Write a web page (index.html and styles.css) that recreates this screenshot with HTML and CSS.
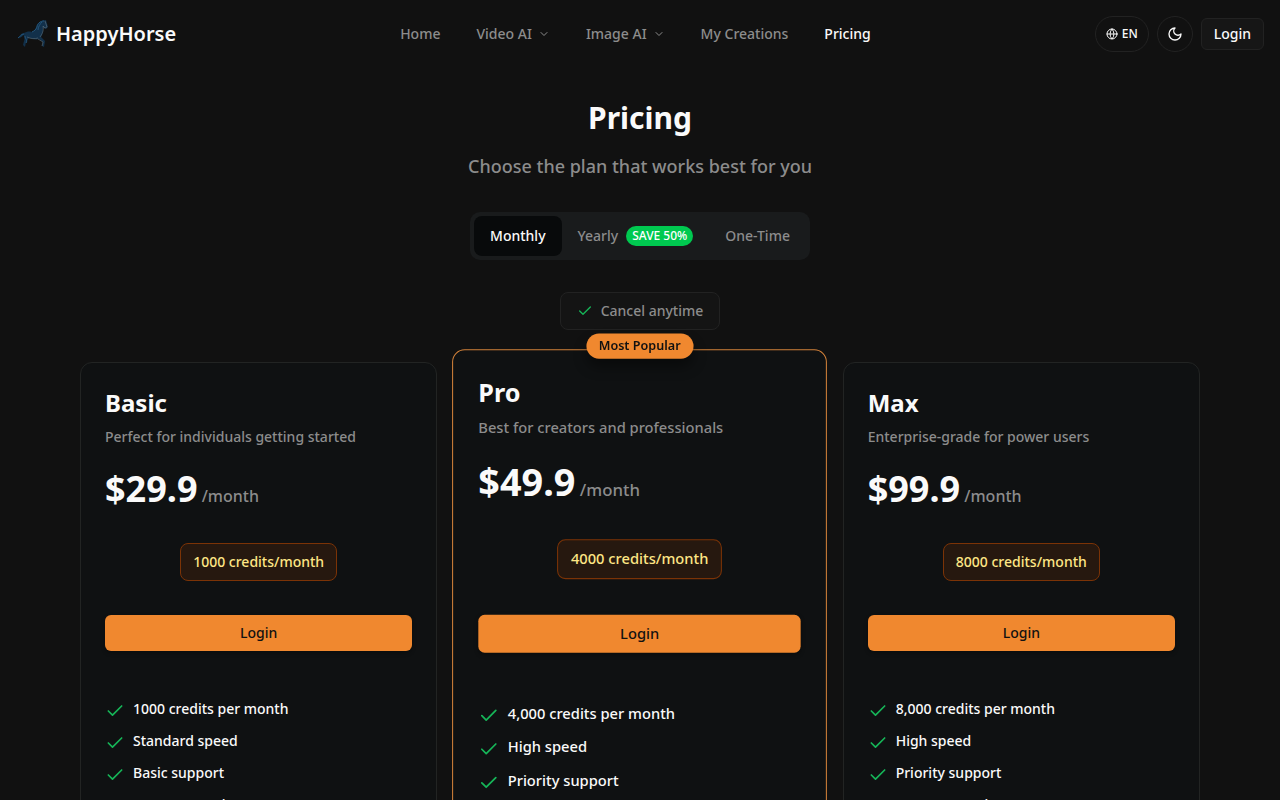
FILE: index.html
```
<!DOCTYPE html>
<html lang="en" class="dark">
<head>
    <meta charset="UTF-8">
    <meta name="viewport" content="width=device-width, initial-scale=1.0">
    <title>Pricing - HappyHorse</title>
    <link rel="stylesheet" href="styles.css">
</head>
<body>
    <!-- Shared icons -->
    <svg class="sprite" aria-hidden="true">
        <symbol id="check" viewBox="0 0 24 24"><path d="M20 6 9 17l-5-5"/></symbol>
        <symbol id="chevron" viewBox="0 0 24 24"><path d="m6 9 6 6 6-6"/></symbol>
    </svg>

    <header class="header">
        <a href="#" class="brand">
            <svg class="logo" viewBox="0 0 32 32" aria-hidden="true">
                <path class="logo-body" d="M30 2C26 2 23 4 21 7c-1 3-2 5-5 7-3-1-6 0-8 1-3 0-4 3-6 5 3 0 4-2 6-3 0 3 1 4 0 6l-1 4 2 2 1-5 3-4c4 1 7 2 10 1l4 3-1 4 2 1 1-6-4-4c2-3 2-6 2-9l3 1 2-2z"/>
                <path class="logo-mane" d="M28 3c-4 0-7 3-7 6-1 3-3 4-5 5M26 4c-2 2-4 5-4 8M8 16c-3 0-4 3-6 4M9 18c0 3 3 4 1 7"/>
                <path class="logo-line" d="m29 3 2 6-2 1-2-2c1 5-1 8-3 11M11 19c4 2 8 2 11 1M22 21l5 3-1 4"/>
            </svg>
            <span>HappyHorse</span>
        </a>

        <nav class="nav">
            <a href="#">Home</a>
            <button type="button">Video AI <svg class="icon chevron"><use href="#chevron"/></svg></button>
            <button type="button">Image AI <svg class="icon chevron"><use href="#chevron"/></svg></button>
            <a href="#">My Creations</a>
            <a href="#" class="active">Pricing</a>
        </nav>

        <div class="actions">
            <button type="button" class="lang">
                <svg class="icon globe" viewBox="0 0 24 24"><circle cx="12" cy="12" r="10"/><path d="M12 2a14.5 14.5 0 0 0 0 20 14.5 14.5 0 0 0 0-20M2 12h20"/></svg>
                EN
            </button>
            <button type="button" class="theme" aria-label="Toggle theme">
                <svg class="icon moon" viewBox="0 0 24 24"><path d="M12 3a6 6 0 0 0 9 9 9 9 0 1 1-9-9Z"/></svg>
            </button>
            <button type="button" class="login">Login</button>
        </div>
    </header>

    <main class="main">
        <h1>Pricing</h1>
        <p class="subtitle">Choose the plan that works best for you</p>

        <div class="tabs">
            <button type="button" class="selected">Monthly</button>
            <button type="button">Yearly <span class="save">SAVE 50%</span></button>
            <button type="button">One-Time</button>
        </div>

        <div class="note"><svg class="icon"><use href="#check"/></svg>Cancel anytime</div>

        <div class="plans">
            <section class="plan">
                <h2>Basic</h2>
                <p class="desc">Perfect for individuals getting started</p>
                <p class="price"><strong>$29.9</strong> /month</p>
                <div class="credits">1000 credits/month</div>
                <button type="button" class="buy">Login</button>
                <ul>
                    <li><svg class="icon"><use href="#check"/></svg>1000 credits per month</li>
                    <li><svg class="icon"><use href="#check"/></svg>Standard speed</li>
                    <li><svg class="icon"><use href="#check"/></svg>Basic support</li>
                    <li><svg class="icon"><use href="#check"/></svg>No watermark</li>
                </ul>
            </section>

            <section class="plan popular">
                <span class="badge">Most Popular</span>
                <h2>Pro</h2>
                <p class="desc">Best for creators and professionals</p>
                <p class="price"><strong>$49.9</strong> /month</p>
                <div class="credits">4000 credits/month</div>
                <button type="button" class="buy">Login</button>
                <ul>
                    <li><svg class="icon"><use href="#check"/></svg>4,000 credits per month</li>
                    <li><svg class="icon"><use href="#check"/></svg>High speed</li>
                    <li><svg class="icon"><use href="#check"/></svg>Priority support</li>
                    <li><svg class="icon"><use href="#check"/></svg>No watermark</li>
                </ul>
            </section>

            <section class="plan">
                <h2>Max</h2>
                <p class="desc">Enterprise-grade for power users</p>
                <p class="price"><strong>$99.9</strong> /month</p>
                <div class="credits">8000 credits/month</div>
                <button type="button" class="buy">Login</button>
                <ul>
                    <li><svg class="icon"><use href="#check"/></svg>8,000 credits per month</li>
                    <li><svg class="icon"><use href="#check"/></svg>High speed</li>
                    <li><svg class="icon"><use href="#check"/></svg>Priority support</li>
                    <li><svg class="icon"><use href="#check"/></svg>No watermark</li>
                </ul>
            </section>
        </div>
    </main>
</body>
</html>
```
FILE: styles.css
```
* {
    margin: 0;
    padding: 0;
    box-sizing: border-box;
}

body {
    font-family: "Noto Sans", sans-serif;
    font-size: 14px;
    line-height: 20px;
    font-weight: 500;
    background-color: #111111;
    color: #fafafa;
}

a {
    color: inherit;
    text-decoration: none;
}

button {
    font: inherit;
    color: inherit;
    background: none;
    border: none;
    cursor: pointer;
}

.sprite {
    display: none;
}

.icon {
    width: 16px;
    height: 16px;
    flex-shrink: 0;
    fill: none;
    stroke: currentColor;
    stroke-width: 2;
    stroke-linecap: round;
    stroke-linejoin: round;
}

/* Header */
.header {
    display: flex;
    justify-content: space-between;
    align-items: center;
    padding: 16px;
}

.brand {
    display: flex;
    align-items: center;
    gap: 8px;
    font-size: 20px;
    line-height: 28px;
    font-weight: 600;
}

.logo {
    width: 32px;
    height: 32px;
    fill: none;
}

.logo-body {
    fill: #12304a;
}

.logo-mane {
    stroke: #23557a;
}

.logo-line {
    stroke: #60717b;
    stroke-width: 0.6;
}

.nav {
    display: flex;
    gap: 4px;
    color: #8c8c8c;
}

.nav a,
.nav button {
    display: flex;
    align-items: center;
    padding: 8px 16px;
}

.nav .active {
    color: #fafafa;
}

.chevron {
    width: 12px;
    height: 12px;
    margin-left: 6px;
}

.actions {
    display: flex;
    align-items: center;
    gap: 8px;
}

.lang,
.theme {
    display: flex;
    align-items: center;
    justify-content: center;
    height: 36px;
    border: 1px solid #222222;
    border-radius: 18px;
}

.lang {
    gap: 4px;
    padding: 0 10px;
    font-size: 12px;
}

.globe {
    width: 12px;
    height: 12px;
}

.theme {
    width: 36px;
}

.login {
    height: 32px;
    padding: 0 12px;
    background-color: #161616;
    border: 1px solid #222222;
    border-radius: 6px;
}

/* Page title and billing period */
.main {
    display: flex;
    flex-direction: column;
    align-items: center;
    max-width: 1152px;
    margin: 0 auto;
    padding: 32px 16px;
}

h1 {
    font-size: 30px;
    line-height: 36px;
    font-weight: 700;
}

.subtitle {
    margin-top: 16px;
    font-size: 18px;
    line-height: 28px;
    color: #8c8c8c;
}

.tabs {
    display: flex;
    margin-top: 32px;
    padding: 4px;
    background-color: #191b1c;
    border-radius: 10px;
    color: #8c8c8c;
}

.tabs button {
    display: flex;
    align-items: center;
    gap: 8px;
    height: 40px;
    padding: 0 16px;
    border-radius: 8px;
}

.tabs .selected {
    background-color: #080a0b;
    color: #fafafa;
}

.save {
    padding: 2px 6px;
    font-size: 12px;
    line-height: 16px;
    background-color: #00c950;
    border-radius: 10px;
    color: #ffffff;
}

.note {
    display: flex;
    align-items: center;
    gap: 8px;
    margin-top: 32px;
    padding: 8px 16px;
    background-color: #141414;
    border: 1px solid #222222;
    border-radius: 8px;
    color: #8c8c8c;
}

.note .icon,
li .icon {
    color: #16b558;
}

/* Plans */
.plans {
    display: grid;
    grid-template-columns: repeat(3, 1fr);
    gap: 24px;
    width: 100%;
    margin-top: 32px;
}

.plan {
    position: relative;
    display: flex;
    flex-direction: column;
    padding: 24px 24px 56px;
    background-color: #0f1112;
    border: 1px solid #222423;
    border-radius: 12px;
}

.popular {
    border-color: #d1813a;
    transform: scale(1.05);
}

.badge {
    position: absolute;
    top: -16px;
    left: 50%;
    transform: translateX(-50%);
    padding: 4px 12px;
    font-size: 12px;
    line-height: 16px;
    font-weight: 600;
    white-space: nowrap;
    background-color: #f0882f;
    border-radius: 12px;
    color: #111111;
    box-shadow: 0 8px 12px rgba(0, 0, 0, 0.4);
}

h2 {
    font-size: 24px;
    line-height: 32px;
    font-weight: 700;
}

.desc {
    margin-top: 8px;
    color: #8c8c8c;
}

.price {
    margin-top: 22px;
    font-size: 16px;
    line-height: 40px;
    color: #8c8c8c;
}

.price strong {
    font-size: 36px;
    font-weight: 700;
    color: #fafafa;
}

.credits {
    align-self: center;
    margin-top: 27px;
    padding: 8px 12px;
    background-color: #26180f;
    border: 1px solid #7b3306;
    border-radius: 8px;
    color: #fee685;
}

.buy {
    height: 36px;
    margin-top: 34px;
    background-color: #f0882f;
    border-radius: 6px;
    color: #111111;
    box-shadow: 0 2px 4px rgba(0, 0, 0, 0.3);
}

ul {
    display: flex;
    flex-direction: column;
    gap: 10px;
    margin-top: 48px;
    list-style: none;
}

li {
    display: flex;
    align-items: flex-start;
    gap: 8px;
}

li .icon {
    width: 20px;
    height: 20px;
    margin-top: 2px;
}
```
